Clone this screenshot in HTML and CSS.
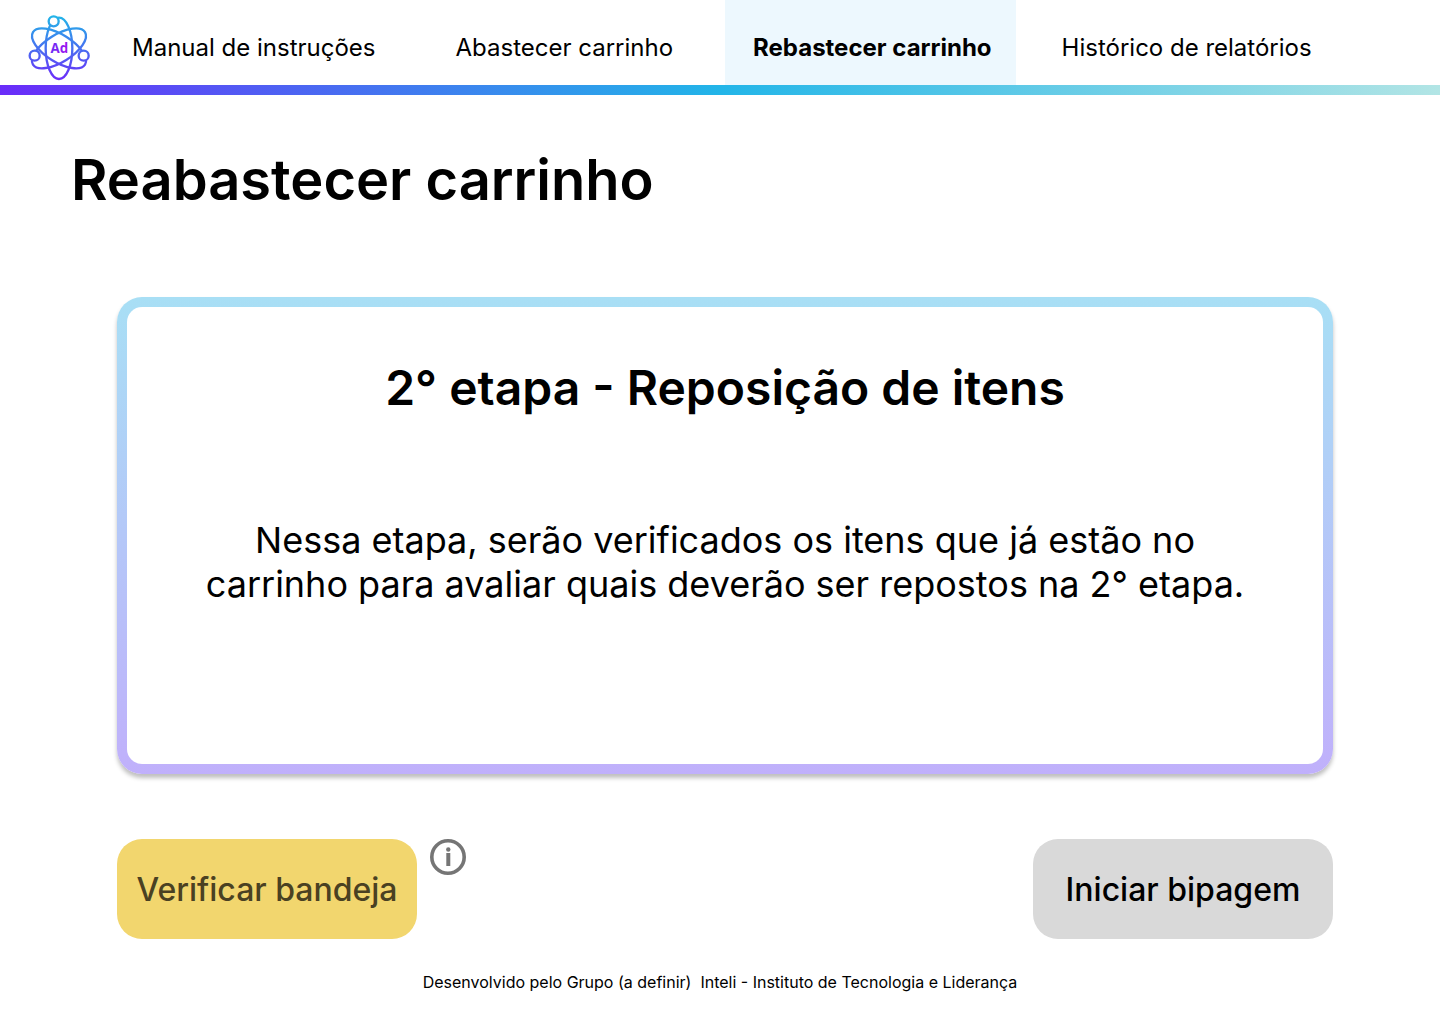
FILE: index.html
```html
<!DOCTYPE html>
<html lang="pt-BR">
<head>
  <meta charset="utf-8">
  <meta name="viewport" content="width=device-width, initial-scale=1">
  <title>Reabastecer carrinho</title>
  <link rel="stylesheet" href="styles.css">
</head>
<body>
  <header class="header">
    <a class="logo" href="#" aria-label="Início">
      <svg class="logo-mark" viewBox="21 21 192 198" fill="none" stroke="url(#atom)" stroke-width="7">
        <defs>
          <linearGradient id="atom" gradientUnits="userSpaceOnUse" x1="0" y1="24" x2="0" y2="216">
            <stop offset="0" stop-color="#22b5e8"/>
            <stop offset="1" stop-color="#6c2bf9"/>
          </linearGradient>
          <linearGradient id="atom-left" href="#atom" gradientTransform="rotate(58 117 121)"/>
          <linearGradient id="atom-right" href="#atom" gradientTransform="rotate(-58 117 121)"/>
          <linearGradient id="word" x1="0" y1="0" x2="1" y2="0">
            <stop offset="0" stop-color="#6a2cf5"/>
            <stop offset="1" stop-color="#a010ee"/>
          </linearGradient>
        </defs>
        <ellipse cx="117" cy="121" rx="40" ry="92"/>
        <ellipse cx="117" cy="121" rx="41" ry="92" transform="rotate(-58 117 121)" stroke="url(#atom-left)"/>
        <ellipse cx="117" cy="121" rx="41" ry="92" transform="rotate(58 117 121)" stroke="url(#atom-right)"/>
        <g fill="#fff">
          <circle cx="101" cy="40" r="15"/>
          <circle cx="44" cy="143" r="15"/>
          <circle cx="191" cy="143" r="15"/>
        </g>
        <text class="logo-text" x="118" y="135" text-anchor="middle" fill="url(#word)" stroke="none">Ad</text>
      </svg>
    </a>
    <nav class="nav">
      <a class="nav-link" href="#">Manual de instruções</a>
      <a class="nav-link" href="#">Abastecer carrinho</a>
      <a class="nav-link nav-link-active" href="#" aria-current="page">Rebastecer carrinho</a>
      <a class="nav-link" href="#">Histórico de relatórios</a>
    </nav>
  </header>

  <main class="main">
    <h1 class="title">Reabastecer carrinho</h1>
    <section class="card">
      <h2 class="card-title">2° etapa - Reposição de itens</h2>
      <p class="card-text">Nessa etapa, serão verificados os itens que já estão no carrinho para avaliar quais deverão ser repostos na 2° etapa.</p>
    </section>
    <div class="actions">
      <button class="button button-check" type="button">Verificar bandeja</button>
      <button class="info" type="button" aria-label="Informações">
        <svg class="info-icon" viewBox="0 0 36 36" fill="#757575">
          <circle cx="18" cy="18" r="16.2" fill="none" stroke="#757575" stroke-width="3.6"/>
          <circle cx="18.3" cy="10.5" r="2.2"/>
          <path d="M16.3 14h4v13h-4z"/>
        </svg>
      </button>
      <button class="button button-start" type="button">Iniciar bipagem</button>
    </div>
  </main>

  <footer class="footer">Desenvolvido pelo Grupo (a definir)&nbsp; Inteli - Instituto de Tecnologia e Liderança</footer>
</body>
</html>
```
FILE: styles.css
```css
* {
  box-sizing: border-box;
}

body {
  margin: 0;
  background: #fff;
  color: #000;
  font-family: Inter, "Liberation Sans", sans-serif;
}

.header {
  display: flex;
  align-items: stretch;
  padding-bottom: 10px;
  background: linear-gradient(#fff, #fff) content-box, linear-gradient(90deg, #6a2cf9, #22b5e8 50%, #b2e5e5);
}

.logo {
  display: flex;
  align-items: flex-start;
  padding: 15px 13px 4px 27px;
}

.logo-mark {
  display: block;
  width: 64px;
  height: 66px;
}

.logo-text {
  font: 700 40px "Open Sans", sans-serif;
}

.nav {
  display: flex;
  flex-wrap: wrap;
  gap: 18px;
}

.nav-link {
  display: flex;
  align-items: center;
  margin-right: 10px;
  padding: 10px 24px 0 28px;
  color: inherit;
  font-size: 24px;
  line-height: 28px;
  text-decoration: none;
}

.nav-link-active {
  margin-right: 0;
  background: #edf8fe;
  font-weight: 700;
}

.main {
  padding: 50px 107px 0 117px;
}

.title {
  margin: 0 0 82px -46px;
  font-size: 56px;
  font-weight: 600;
  line-height: 70px;
}

.card {
  min-height: 477px;
  padding: 52px 70px;
  border: 10px solid transparent;
  border-radius: 25px;
  background: linear-gradient(#fff, #fff) padding-box, linear-gradient(#a8dff5, #c0b0fb) border-box;
  box-shadow: 0 4px 4px rgba(0, 0, 0, 0.25);
  text-align: center;
}

.card-title {
  margin: 0 0 101px;
  font-size: 48px;
  font-weight: 600;
  line-height: 58px;
}

.card-text {
  margin: 0;
  font-size: 36px;
  line-height: 44px;
}

.actions {
  display: flex;
  align-items: flex-start;
  gap: 13px;
  margin-top: 65px;
}

.button {
  width: 300px;
  height: 100px;
  padding: 0;
  border: 0;
  border-radius: 25px;
  color: #000;
  font: 500 32px Inter, "Liberation Sans", sans-serif;
}

.button-check {
  background: #f2d66e;
  color: #4a4122;
}

.button-start {
  margin-left: auto;
  background: #d9d9d9;
}

.info {
  padding: 0;
  border: 0;
  background: none;
}

.info-icon {
  display: block;
  width: 36px;
  height: 36px;
}

.footer {
  padding: 33px 24px;
  font-size: 16px;
  line-height: 20px;
  text-align: center;
}
```
